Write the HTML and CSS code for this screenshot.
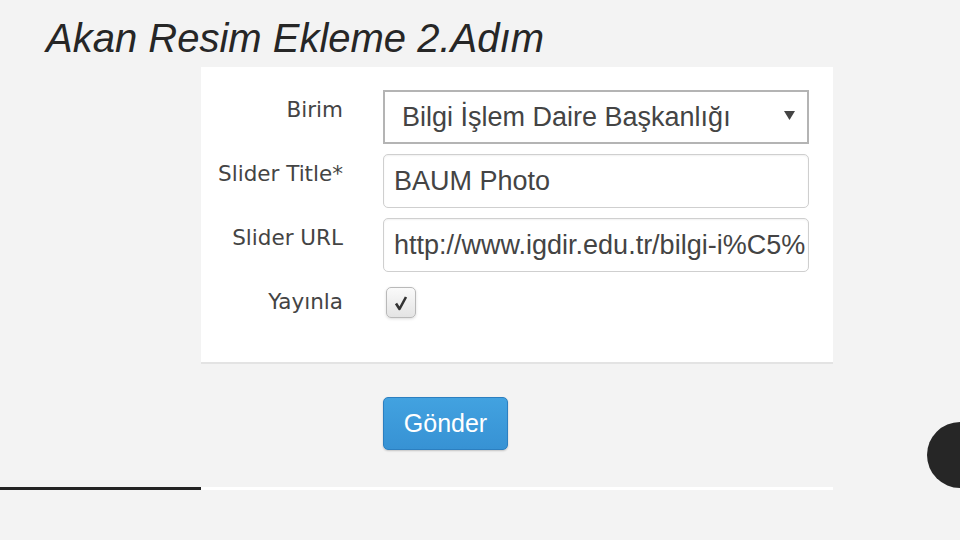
FILE: index.html
```html
<!DOCTYPE html>
<html lang="tr">
<head>
    <meta charset="UTF-8">
    <title>Akan Resim Ekleme 2.Adım</title>
    <link rel="stylesheet" href="styles.css">
</head>
<body>
    <h1 class="title">Akan Resim Ekleme 2.Adım</h1>

    <div class="shot">
        <form class="panel">
            <label class="field-label">Birim</label>
            <div class="select">
                <span>Bilgi İşlem Daire Başkanlığı</span>
                <svg class="caret" width="11" height="9" viewBox="0 0 11 9"><path d="M0 0H11L5.5 9Z" fill="#444"/></svg>
            </div>

            <label class="field-label">Slider Title*</label>
            <div class="input">BAUM Photo</div>

            <label class="field-label">Slider URL</label>
            <div class="input">http://www.igdir.edu.tr/bilgi-i%C5%</div>

            <label class="field-label">Yayınla</label>
            <div class="check-wrap">
                <span class="check">
                    <svg width="18" height="18" viewBox="0 0 18 18"><path d="M4 9.5L7.5 15L14 3" fill="none" stroke="#333" stroke-width="2.6" stroke-linejoin="round"/></svg>
                </span>
            </div>
        </form>

        <div class="actions">
            <button type="button" class="btn">Gönder</button>
        </div>
    </div>

    <div class="rule">
        <span class="rule-dark"></span>
        <span class="rule-light"></span>
    </div>

    <span class="dot"></span>
</body>
</html>
```

FILE: styles.css
```css
body {
    margin: 0;
    width: 960px;
    height: 540px;
    overflow: hidden;
    position: relative;
    background: #f3f3f3;
    font-family: "Liberation Sans", Arial, sans-serif;
    color: #262626;
}

.title {
    margin: 0;
    padding: 14px 0 5px 46px;
    font-size: 40px;
    line-height: 48px;
    font-weight: normal;
    font-style: italic;
    color: #262626;
}

.shot {
    margin-left: 201px;
    width: 632px;
}

.panel {
    height: 272px;
    padding-top: 23px;
    background: #fff;
    border-bottom: 2px solid #e3e3e3;
    display: grid;
    grid-template-columns: 142px 426px;
    grid-auto-rows: 54px;
    column-gap: 40px;
    row-gap: 10px;
    align-content: start;
}

.field-label {
    padding-top: 8px;
    text-align: right;
    font-family: "DejaVu Sans", sans-serif;
    font-size: 21.5px;
    line-height: 24px;
    color: #444;
}

.select,
.input {
    box-sizing: border-box;
    height: 54px;
    display: flex;
    align-items: center;
    font-size: 27px;
    color: #444;
    white-space: nowrap;
    overflow: hidden;
}

.select {
    justify-content: space-between;
    padding: 0 12px 0 17px;
    border: 2px solid #b4b4b4;
    background: #fff;
}

.caret {
    margin-top: -4px;
}

.input {
    padding: 0 8px 0 10px;
    border: 1px solid #cfcfcf;
    border-radius: 5px;
    box-shadow: inset 0 1px 2px rgba(0, 0, 0, 0.06);
}

.check-wrap {
    display: flex;
    align-items: flex-start;
    padding-top: 5px;
}

.check {
    margin-left: 3px;
    width: 30px;
    height: 31px;
    box-sizing: border-box;
    display: flex;
    align-items: center;
    justify-content: center;
    border: 1px solid #b9b9b9;
    border-radius: 5px;
    background: linear-gradient(#fafafa, #e4e4e4);
    box-shadow: 0 1px 3px rgba(0, 0, 0, 0.14);
}

.actions {
    padding: 33px 0 37px 182px;
}

.btn {
    width: 125px;
    height: 53px;
    border: 1px solid #2c7fc0;
    border-radius: 5px;
    background: linear-gradient(#42a2e0, #3792d4);
    color: #fff;
    font-family: "Liberation Sans", Arial, sans-serif;
    font-size: 25px;
    padding: 0;
    box-shadow: 0 1px 2px rgba(0, 0, 0, 0.2);
}

.rule {
    display: flex;
    height: 3px;
}

.rule-dark {
    width: 201px;
    background: #222;
}

.rule-light {
    width: 632px;
    background: #fff;
}

.dot {
    position: absolute;
    left: 927px;
    top: 422px;
    width: 66px;
    height: 66px;
    border-radius: 50%;
    background: #262626;
}
```
